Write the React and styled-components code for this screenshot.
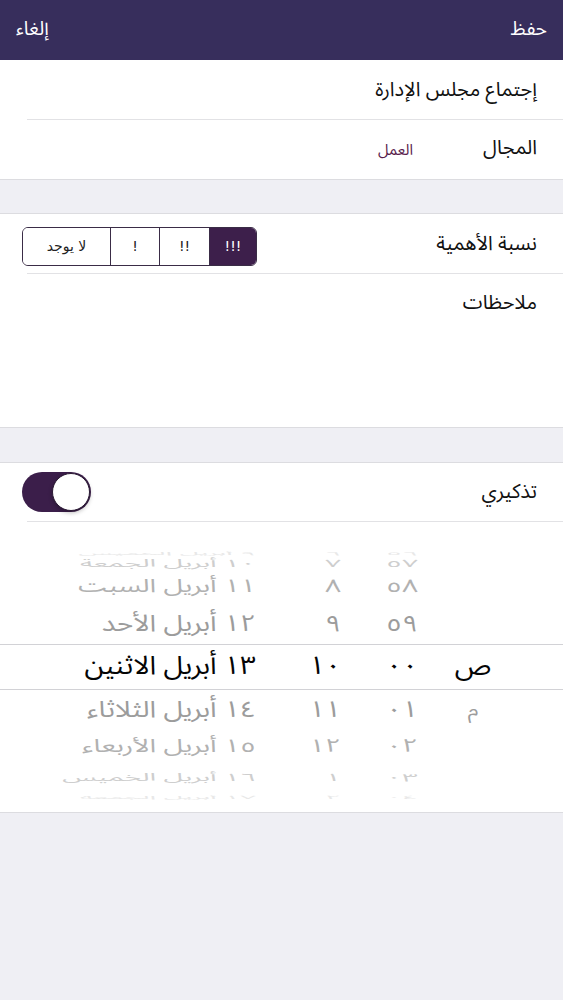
import styled, { createGlobalStyle } from "styled-components";

const GlobalStyle = createGlobalStyle`
  html, body {
    margin: 0;
    padding: 0;
    background: #efeff4;
  }
  body {
    font-family: "Noto Sans Arabic", "DejaVu Sans", sans-serif;
  }
`;

// wheel rows: same size, squeezed vertically the further from the middle
const LEVELS = {
  0: { color: "#050505", scale: 0.92 },
  1: { color: "#9c9c9c", scale: 0.82 },
  2: { color: "#b1b1b1", scale: 0.66 },
  3: { color: "#cecece", scale: 0.38 },
  4: { color: "#e8e8e8", scale: 0.17 },
};

const wheel = [
  { lvl: 4, h: 10, date: "٩ أبريل الخميس", hour: "٦", min: "٥٦" },
  { lvl: 3, h: 20, date: "١٠ أبريل الجمعة", hour: "٧", min: "٥٧" },
  { lvl: 2, h: 34, date: "١١ أبريل السبت", hour: "٨", min: "٥٨" },
  { lvl: 1, h: 40, date: "١٢ أبريل الأحد", hour: "٩", min: "٥٩" },
  { lvl: 0, h: 46, date: "١٣ أبريل الاثنين", hour: "١٠", min: "٠٠", ampm: "ص" },
  { lvl: 1, h: 40, date: "١٤ أبريل الثلاثاء", hour: "١١", min: "٠١", ampm: "م" },
  { lvl: 2, h: 34, date: "١٥ أبريل الأربعاء", hour: "١٢", min: "٠٢" },
  { lvl: 3, h: 20, date: "١٦ أبريل الخميس", hour: "١", min: "٠٣" },
  { lvl: 4, h: 10, date: "١٧ أبريل الجمعة", hour: "٢", min: "٠٤" },
];

const App = () => {
  return (
    <Page>
      <GlobalStyle />
      <NavBar>
        <NavButton>حفظ</NavButton>
        <NavButton>إلغاء</NavButton>
      </NavBar>

      <Section>
        <Row>
          <Label>إجتماع مجلس الإدارة</Label>
        </Row>
        <Divider />
        <Row>
          <FieldLabel>المجال</FieldLabel>
          <FieldValue>العمل</FieldValue>
        </Row>
      </Section>

      <Section $gap={33} $top>
        <Row $spread>
          <Label>نسبة الأهمية</Label>
          <Segmented>
            <Segment $w={87}>لا يوجد</Segment>
            <Segment $w={49}>!</Segment>
            <Segment $w={50}>!!</Segment>
            <Segment $w={47} $active>
              !!!
            </Segment>
          </Segmented>
        </Row>
        <Divider />
        <Notes>
          <Label>ملاحظات</Label>
        </Notes>
      </Section>

      <Section $gap={34} $top>
        <Row $h={58} $spread>
          <Label>تذكيري</Label>
          <Toggle>
            <Knob />
          </Toggle>
        </Row>
        <Divider />
        <Picker>
          {wheel.map((r, i) => (
            <WheelRow key={i} $h={r.h} $selected={r.lvl === 0}>
              <Cell $lvl={r.lvl} $align="center" $size={r.lvl === 0 ? 28 : 22}>
                {r.ampm || ""}
              </Cell>
              <Cell $lvl={r.lvl} $pad={18}>
                {r.min}
              </Cell>
              <Cell $lvl={r.lvl} $pad={4}>
                {r.hour}
              </Cell>
              <Cell $lvl={r.lvl} $pad={26}>
                {r.date}
              </Cell>
            </WheelRow>
          ))}
        </Picker>
      </Section>
    </Page>
  );
};

export default App;

const Page = styled.div`
  width: 563px;
  min-height: 1000px;
  background: #efeff4;
  direction: rtl;
  font-family: "Noto Sans Arabic", "DejaVu Sans", sans-serif;
`;

const NavBar = styled.header`
  height: 60px;
  background: #372e5c;
  display: flex;
  align-items: center;
  justify-content: space-between;
  padding: 0 16px 2px 16px;
  box-sizing: border-box;
  color: #fff;
  font-size: 19px;
`;

const NavButton = styled.span`
  line-height: 1;
`;

const Section = styled.section`
  background: #fff;
  margin-top: ${(p) => p.$gap || 0}px;
  border-top: ${(p) => (p.$top ? "1px solid #dcdce0" : "none")};
  border-bottom: 1px solid #dcdce0;
`;

const Row = styled.div`
  height: ${(p) => p.$h || 59}px;
  display: flex;
  align-items: center;
  justify-content: ${(p) => (p.$spread ? "space-between" : "flex-start")};
  padding: 0 26px 0 22px;
  box-sizing: border-box;
`;

const Label = styled.span`
  font-size: 20px;
  color: #111;
  line-height: 28px;
`;

const FieldLabel = styled(Label)`
  width: 124px;
  margin-top: -3px;
`;

const FieldValue = styled.span`
  font-size: 15px;
  color: #5a1d4c;
`;

const Divider = styled.div`
  height: 1px;
  background: #e2e2e5;
  margin-left: 27px;
`;

const Notes = styled.div`
  height: 153px;
  padding: 13px 26px 0 0;
  box-sizing: border-box;
`;

const Segmented = styled.div`
  display: flex;
  direction: ltr;
  width: 235px;
  height: 39px;
  box-sizing: border-box;
  border: 1px solid #3a2c46;
  border-radius: 6px;
  overflow: hidden;
  margin-top: 5px;
`;

const Segment = styled.div`
  width: ${(p) => p.$w}px;
  flex: none;
  display: flex;
  align-items: center;
  justify-content: center;
  box-sizing: border-box;
  border-left: 1px solid #3a2c46;
  background: ${(p) => (p.$active ? "#3d1f4b" : "#fff")};
  color: ${(p) => (p.$active ? "#fff" : "#222")};
  font-size: 14px;
  font-family: "DejaVu Sans", sans-serif;

  &:first-child {
    border-left: none;
  }
`;

const Toggle = styled.div`
  width: 69px;
  height: 40px;
  border-radius: 20px;
  background: #3b1e4a;
  display: flex;
  direction: ltr;
  justify-content: flex-end;
  align-items: center;
  padding: 0 1px;
  box-sizing: border-box;
`;

const Knob = styled.div`
  width: 38px;
  height: 38px;
  border-radius: 50%;
  background: #fff;
  box-sizing: border-box;
  border: 1px solid #2a1a33;
  box-shadow: 0 2px 4px rgba(0, 0, 0, 0.25);
`;

const Picker = styled.div`
  height: 290px;
  padding: 18px 0;
  box-sizing: border-box;
  display: flex;
  flex-direction: column;
`;

const WheelRow = styled.div`
  height: ${(p) => p.$h}px;
  flex: none;
  display: grid;
  grid-template-columns: 74px 91px 63px 1fr;
  align-items: center;
  padding-right: 53px;
  box-sizing: border-box;
  border-top: ${(p) => (p.$selected ? "1px solid #d2d2d6" : "none")};
  border-bottom: ${(p) => (p.$selected ? "1px solid #d2d2d6" : "none")};
`;

const Cell = styled.div`
  text-align: ${(p) => p.$align || "right"};
  padding-right: ${(p) => p.$pad || 0}px;
  font-size: ${(p) => p.$size || 28}px;
  color: ${(p) => LEVELS[p.$lvl].color};
  transform: scaleY(${(p) => LEVELS[p.$lvl].scale});
  line-height: 1;
  white-space: nowrap;
`;
